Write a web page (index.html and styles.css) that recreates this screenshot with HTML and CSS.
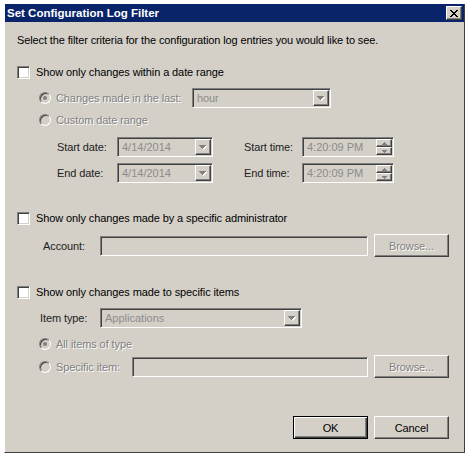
FILE: index.html
```html
<!DOCTYPE html>
<html lang="en">
<head>
  <meta charset="UTF-8">
  <title>Set Configuration Log Filter</title>
  <link rel="stylesheet" href="styles.css">
</head>
<body>
  <div class="window">
    <div class="titlebar">
      <span class="title">Set Configuration Log Filter</span>
      <button class="close-btn raised">
        <svg width="8" height="7" viewBox="0 0 8 7" shape-rendering="crispEdges"><path fill="#000" d="M0 0h2v1h-2z M6 0h2v1h-2z M1 1h2v1h-2z M5 1h2v1h-2z M2 2h4v1h-4z M3 3h2v1h-2z M2 4h4v1h-4z M1 5h2v1h-2z M5 5h2v1h-2z M0 6h2v1h-2z M6 6h2v1h-2z"/></svg>
      </button>
    </div>

    <div class="content">
      <p class="intro">Select the filter criteria for the configuration log entries you would like to see.</p>

      <div class="check-row row-date"><span class="checkbox"></span>Show only changes within a date range</div>

      <div class="radio-row row-last">
        <span class="radio checked"></span>
        <span class="disabled label-last">Changes made in the last:</span>
        <div class="field w-hour">
          <span class="value">hour</span>
          <span class="drop-btn raised">
            <svg width="8" height="5" viewBox="0 0 8 5" shape-rendering="crispEdges"><path fill="#fff" d="M1 1h7v1h-1v1h-1v1h-1v1h-1v-1h-1v-1h-1v-1h-1z"/><path fill="#808080" d="M0 0h7v1h-1v1h-1v1h-1v1h-1v-1h-1v-1h-1v-1h-1z"/></svg>
          </span>
        </div>
      </div>

      <div class="radio-row row-custom">
        <span class="radio"></span>
        <span class="disabled">Custom date range</span>
      </div>

      <div class="date-row row-start">
        <span class="label date-label">Start date:</span>
        <div class="field w-date">
          <span class="value">4/14/2014</span>
          <span class="drop-btn raised">
            <svg width="8" height="5" viewBox="0 0 8 5" shape-rendering="crispEdges"><path fill="#fff" d="M1 1h7v1h-1v1h-1v1h-1v1h-1v-1h-1v-1h-1v-1h-1z"/><path fill="#808080" d="M0 0h7v1h-1v1h-1v1h-1v1h-1v-1h-1v-1h-1v-1h-1z"/></svg>
          </span>
        </div>
        <span class="label time-label">Start time:</span>
        <div class="field w-time">
          <span class="value">4:20:09 PM</span>
          <span class="spinner">
            <span class="spin-btn raised"><svg width="5" height="3" viewBox="0 0 5 3" shape-rendering="crispEdges"><path fill="#808080" d="M2 0h1v1h1v1h1v1h-5v-1h1v-1h1z"/></svg></span>
            <span class="spin-btn raised"><svg width="5" height="3" viewBox="0 0 5 3" shape-rendering="crispEdges"><path fill="#808080" d="M0 0h5v1h-1v1h-1v1h-1v-1h-1v-1h-1z"/></svg></span>
          </span>
        </div>
      </div>

      <div class="date-row row-end">
        <span class="label date-label">End date:</span>
        <div class="field w-date">
          <span class="value">4/14/2014</span>
          <span class="drop-btn raised">
            <svg width="8" height="5" viewBox="0 0 8 5" shape-rendering="crispEdges"><path fill="#fff" d="M1 1h7v1h-1v1h-1v1h-1v1h-1v-1h-1v-1h-1v-1h-1z"/><path fill="#808080" d="M0 0h7v1h-1v1h-1v1h-1v1h-1v-1h-1v-1h-1v-1h-1z"/></svg>
          </span>
        </div>
        <span class="label time-label">End time:</span>
        <div class="field w-time">
          <span class="value">4:20:09 PM</span>
          <span class="spinner">
            <span class="spin-btn raised"><svg width="5" height="3" viewBox="0 0 5 3" shape-rendering="crispEdges"><path fill="#808080" d="M2 0h1v1h1v1h1v1h-5v-1h1v-1h1z"/></svg></span>
            <span class="spin-btn raised"><svg width="5" height="3" viewBox="0 0 5 3" shape-rendering="crispEdges"><path fill="#808080" d="M0 0h5v1h-1v1h-1v1h-1v-1h-1v-1h-1z"/></svg></span>
          </span>
        </div>
      </div>

      <div class="check-row row-admin"><span class="checkbox"></span>Show only changes made by a specific administrator</div>

      <div class="field-row row-account">
        <span class="label account-label">Account:</span>
        <div class="field w-account"></div>
        <button class="btn raised disabled">Browse...</button>
      </div>

      <div class="check-row row-items"><span class="checkbox"></span>Show only changes made to specific items</div>

      <div class="field-row row-type">
        <span class="label type-label">Item type:</span>
        <div class="field w-type">
          <span class="value">Applications</span>
          <span class="drop-btn raised">
            <svg width="8" height="5" viewBox="0 0 8 5" shape-rendering="crispEdges"><path fill="#fff" d="M1 1h7v1h-1v1h-1v1h-1v1h-1v-1h-1v-1h-1v-1h-1z"/><path fill="#808080" d="M0 0h7v1h-1v1h-1v1h-1v1h-1v-1h-1v-1h-1v-1h-1z"/></svg>
          </span>
        </div>
      </div>

      <div class="radio-row row-all">
        <span class="radio checked"></span>
        <span class="disabled">All items of type</span>
      </div>

      <div class="radio-row row-specific">
        <span class="radio"></span>
        <span class="disabled label-specific">Specific item:</span>
        <div class="field w-specific"></div>
        <button class="btn raised disabled">Browse...</button>
      </div>

      <div class="button-row">
        <button class="btn default">OK</button>
        <button class="btn raised">Cancel</button>
      </div>
    </div>
  </div>
</body>
</html>
```

FILE: styles.css
```css
* {
  box-sizing: border-box;
}
body {
  margin: 0;
  background: #fff;
  font-family: 'Liberation Sans', Arial, sans-serif;
  font-size: 11px;
  color: #000;
}
.window {
  margin: 4px 0 0 4px;
  width: 461px;
  height: 449px;
  background: #d4d0c8;
  border-left: 1px solid #fff;
  border-right: 1px solid #404040;
  border-bottom: 1px solid #404040;
}
.titlebar {
  height: 18px;
  background: #0a246a;
  display: flex;
  align-items: center;
  justify-content: space-between;
  padding: 0 2px;
}
.title {
  color: #fff;
  font-weight: bold;
  font-size: 11.5px;
}
.raised {
  background: #d4d0c8;
  border: 1px solid;
  border-color: #fff #404040 #404040 #fff;
  box-shadow: inset -1px -1px 0 #808080;
}
.close-btn {
  width: 16px;
  height: 14px;
  padding: 0;
  display: flex;
  align-items: center;
  justify-content: center;
}
.content {
  padding: 11px 15px 0 12px;
}
.intro {
  margin: 0;
  height: 14px;
  line-height: 14px;
  letter-spacing: -0.12px;
}
.check-row {
  display: flex;
  align-items: center;
  gap: 6px;
  height: 14px;
  letter-spacing: -0.1px;
}
.checkbox {
  width: 13px;
  height: 13px;
  background: #fff;
  border: 1px solid;
  border-color: #808080 #fff #fff #808080;
  box-shadow: inset 1px 1px 0 #404040, inset -1px -1px 0 #d4d0c8;
}
.radio-row {
  display: flex;
  align-items: center;
  padding-left: 22px;
  letter-spacing: -0.1px;
}
.radio {
  position: relative;
  width: 12px;
  height: 12px;
  margin-right: 5px;
  border-radius: 50%;
  background: #d4d0c8;
  border: 1px solid;
  border-color: #808080 #fff #fff #808080;
  box-shadow: inset 1px 1px 0 #404040, inset -1px -1px 0 #d4d0c8;
}
.radio.checked::after {
  content: '';
  position: absolute;
  left: 3px;
  top: 3px;
  width: 4px;
  height: 4px;
  border-radius: 50%;
  background: #808080;
}
.disabled {
  color: #808080;
  text-shadow: 1px 1px 0 #fff;
}
.label {
  color: #1c1c1c;
  letter-spacing: -0.1px;
}
.label-last {
  width: 136px;
}
.label-specific {
  width: 76px;
}
.field {
  display: flex;
  align-items: center;
  height: 20px;
  padding: 1px;
  background: #d4d0c8;
  border: 1px solid;
  border-color: #808080 #fff #fff #808080;
  box-shadow: inset 1px 1px 0 #404040, inset -1px -1px 0 #d4d0c8;
}
.value {
  flex: 1;
  padding-left: 3px;
  color: #8c8c8c;
}
.drop-btn {
  width: 16px;
  height: 16px;
  display: flex;
  align-items: center;
  justify-content: center;
}
.spinner {
  display: flex;
  flex-direction: column;
  width: 16px;
  height: 16px;
}
.spin-btn {
  flex: 1;
  display: flex;
  align-items: center;
  justify-content: center;
}
.w-hour {
  width: 139px;
}
.w-date {
  width: 96px;
}
.w-time {
  width: 92px;
}
.w-account {
  width: 268px;
}
.w-type {
  width: 202px;
}
.w-specific {
  width: 236px;
}
.date-row {
  display: flex;
  align-items: center;
  height: 20px;
  padding-left: 40px;
}
.date-label {
  width: 60px;
}
.time-label {
  width: 58px;
  margin-left: 31px;
}
.field-row {
  display: flex;
  align-items: center;
}
.account-label {
  width: 57px;
}
.type-label {
  width: 60px;
}
.btn {
  width: 75px;
  height: 23px;
  padding: 0;
  font-family: inherit;
  font-size: 11px;
  letter-spacing: -0.1px;
}
.btn.disabled {
  margin-left: 6px;
}
.btn.default {
  background: #d4d0c8;
  border: 1px solid #000;
  box-shadow: inset 1px 1px 0 #fff, inset -1px -1px 0 #404040, inset -2px -2px 0 #808080;
  color: #000;
}
.row-date {
  margin-top: 18px;
}
.row-last {
  height: 20px;
  margin-top: 9px;
}
.row-custom {
  height: 14px;
  margin-top: 5px;
}
.row-start {
  margin-top: 10px;
}
.row-end {
  margin-top: 6px;
}
.row-admin {
  margin-top: 28px;
}
.row-account {
  height: 23px;
  margin-top: 9px;
  padding-left: 26px;
}
.row-items {
  margin-top: 28px;
}
.row-type {
  height: 20px;
  margin-top: 9px;
  padding-left: 23px;
}
.row-all {
  height: 14px;
  margin-top: 9px;
}
.row-specific {
  height: 23px;
  margin-top: 4px;
}
.button-row {
  display: flex;
  justify-content: flex-end;
  gap: 6px;
  margin-top: 38px;
}
```
